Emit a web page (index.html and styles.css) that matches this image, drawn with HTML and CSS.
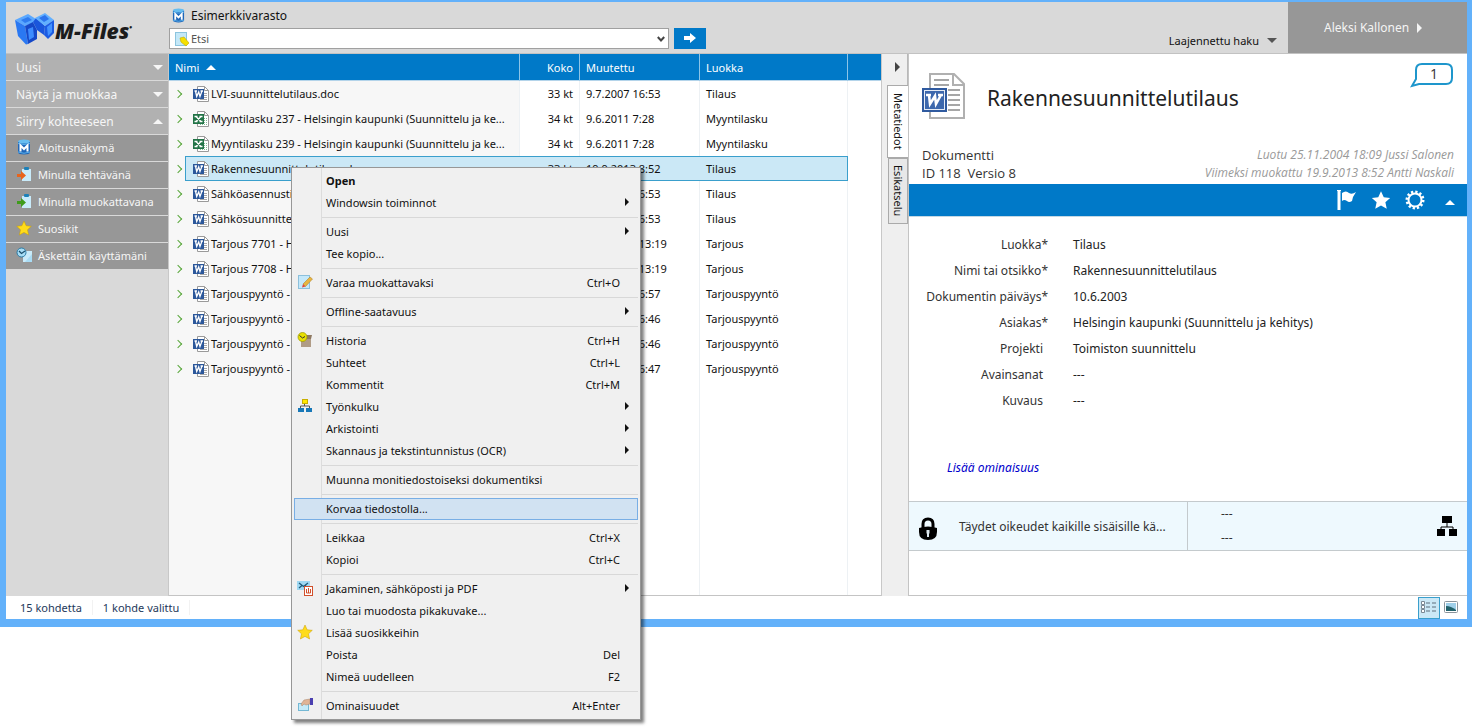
FILE: index.html
```
<!DOCTYPE html>
<html lang="fi">
<head>
  <meta charset="UTF-8" />
  <meta name="viewport" content="width=device-width, initial-scale=1.0" />
  <title>M-Files - Esimerkkivarasto</title>
  <link rel="stylesheet" href="styles.css">
</head>
<body>

  <!-- shared icons -->
  <svg class="sprite" aria-hidden="true">
    <symbol id="icon-word" viewBox="0 0 16 16">
      <path d="M4.500.5h7l4 4v11h-11z" fill="#fff" stroke="#9a9a9a" />
      <path d="M11.500.5v4h4" fill="none" stroke="#9a9a9a" />
      <path d="M11 7.500h3M11 9.500h3M11 11.500h3M7 13.500h7" stroke="#a9a9a9" />
      <rect x="0" y="3" width="11" height="10" fill="#2b579a" />
      <path d="M1.500 5h2.500M2.500 5l1.200 5.500L5.700 6l1.300 4.500L9 5M7.500 5H10" fill="none" stroke="#fff" stroke-width="1.300" />
    </symbol>
    <symbol id="icon-excel" viewBox="0 0 16 16">
      <path d="M4.500.5h7l4 4v11h-11z" fill="#fff" stroke="#9a9a9a" />
      <path d="M11.500.5v4h4" fill="none" stroke="#9a9a9a" />
      <path d="M11 7.500h3M11 9.500h3M11 11.500h3M7 13.500h7" stroke="#7fb894" stroke-dasharray="1 1" />
      <rect x="0" y="3" width="11" height="10" fill="#217346" />
      <path d="M1.500 5.500h3M6.500 5.500h3M1.500 10.500h3M6.500 10.500h3M3 5.500l5 5M8 5.500l-5 5" fill="none" stroke="#fff" stroke-width="1.300" />
    </symbol>
    <symbol id="icon-vault" viewBox="0 0 14 16">
      <path d="M1 2.500v11c0 1 2.500 2 6 2s6-1 6-2v-11z" fill="#1f66b8" />
      <ellipse cx="7" cy="2.500" rx="6" ry="2" fill="#67bdf0" />
      <path d="M1 4.500q6 2 12 0M1 13q6 2.500 12 0" fill="none" stroke="#5cb0ea" />
      <path d="M3.500 12.500V6.500l3.500 3.500L10.500 6.500v6" fill="none" stroke="#fff" stroke-width="2" />
    </symbol>
    <symbol id="icon-star" viewBox="0 0 16 16">
      <path d="M8 1l2.200 4.800 5.100.5-3.800 3.500 1.100 5.200L8 12.400 3.400 15l1.100-5.200L.7 6.300l5.100-.5z" />
    </symbol>
    <symbol id="icon-clipboard" viewBox="0 0 16 16">
      <rect x="6" y="3" width="9" height="12" fill="#c9ebfa" />
      <rect x="8" y="1" width="5" height="3" rx="1" fill="#1c80b8" />
      <path d="M1 8h4V5l5 4.500L5 14v-3H1z" fill="currentColor" />
    </symbol>
    <symbol id="icon-recent" viewBox="0 0 16 16">
      <rect x="7" y="4" width="9" height="11" fill="#c9ebfa" />
      <path d="M9 15h7v-8z" fill="#a9dcf5" />
      <circle cx="5.500" cy="5.500" r="4.500" fill="#a6dcf4" stroke="#2a7ba6" />
      <path d="M3 4l2.500 2.500L9 4" fill="none" stroke="#1b4f6e" stroke-width="1.300" />
    </symbol>
    <symbol id="icon-flow" viewBox="0 0 20 20">
      <rect x="5" y="0" width="10" height="7" />
      <path d="M10 7v4M4 14v-3h12v3" fill="none" stroke="#000" />
      <rect x="0" y="13" width="8" height="7" />
      <rect x="12" y="13" width="8" height="7" />
    </symbol>
  </svg>

  <div class="window">
    <header class="topbar">
      <div class="logo">
        <svg class="logo-mark" viewBox="0 0 40 32" aria-hidden="true">
          <path d="M0 7l13-6 8 5-3 4-8 3z" fill="#5aa8ff" />
          <path d="M6 7l7-3 4 3-7 3z" fill="#2f7cf0" />
          <path d="M0 7l10 6 3 18-2 .5L3 23z" fill="#2a78f2" />
          <path d="M10 13l8-4 4 8v9l-9 5z" fill="#1548c8" />
          <path d="M13 16l5-2 1 10-5 3z" fill="#3d8cff" />
          <path d="M18 9l3-4 9 8-1 9-7-5z" fill="#1a56dc" />
          <path d="M20 5l10-5 9 7-9 6z" fill="#62b0ff" />
          <path d="M24 5l6-3 4 4-5 3z" fill="#2c74ee" />
          <path d="M30 13l9-6v13l-6 6-4-4z" fill="#1c5ce4" />
          <path d="M32 14l5-4v9l-4 4z" fill="#4593ff" />
        </svg>
        <span class="logo-text">M-Files<sup>•</sup></span>
      </div>

      <div class="search">
        <div class="vault">
          <svg class="icon-vault" viewBox="0 0 14 16"><use href="#icon-vault" /></svg>
          <span>Esimerkkivarasto</span>
        </div>
        <form class="search-row">
          <div class="search-box">
            <svg class="icon" viewBox="0 0 16 16" aria-hidden="true">
              <rect x="2.500" y="1.500" width="11" height="13" fill="#c4e8f8" stroke="#8cc4de" />
              <path d="M7 7l4-1 5 6-3 3-5-4z" fill="#f5e000" stroke="#c4a800" stroke-width=".6" />
            </svg>
            <input type="text" placeholder="Etsi" aria-label="Etsi">
            <button type="button" class="search-drop" aria-label="Aiemmat haut">
              <svg viewBox="0 0 8 6"><path d="M.8 1L4 4.500 7.200 1" fill="none" stroke="#444" stroke-width="2" /></svg>
            </button>
          </div>
          <button type="submit" class="search-go" aria-label="Hae">
            <svg viewBox="0 0 12 10"><path d="M0 3h6V0l6 5-6 5V7H0z" fill="#fff" /></svg>
          </button>
        </form>
      </div>

      <button type="button" class="advanced">Laajennettu haku <span class="tri tri-down"></span></button>
      <button type="button" class="user">Aleksi Kallonen <span class="tri tri-right"></span></button>
    </header>

    <div class="content">
      <nav class="sidebar">
        <button type="button" class="side-group">Uusi <span class="tri tri-down"></span></button>
        <button type="button" class="side-group">Näytä ja muokkaa <span class="tri tri-down"></span></button>
        <button type="button" class="side-group">Siirry kohteeseen <span class="tri tri-up"></span></button>
        <a href="#" class="side-item"><svg class="icon"><use href="#icon-vault" /></svg>Aloitusnäkymä</a>
        <a href="#" class="side-item"><svg class="icon orange"><use href="#icon-clipboard" /></svg>Minulla tehtävänä</a>
        <a href="#" class="side-item"><svg class="icon green"><use href="#icon-clipboard" /></svg>Minulla muokattavana</a>
        <a href="#" class="side-item"><svg class="icon gold"><use href="#icon-star" /></svg>Suosikit</a>
        <a href="#" class="side-item"><svg class="icon"><use href="#icon-recent" /></svg>Äskettäin käyttämäni</a>
      </nav>

      <main class="listing">
        <table class="files">
          <colgroup>
            <col class="col-expand">
            <col class="col-name">
            <col class="col-size">
            <col class="col-date">
            <col class="col-class">
            <col class="col-rest">
          </colgroup>
          <thead>
            <tr>
              <th colspan="2">Nimi <span class="tri tri-up"></span></th>
              <th class="num">Koko</th>
              <th>Muutettu</th>
              <th>Luokka</th>
              <th></th>
            </tr>
          </thead>
          <tbody>
            <tr>
              <td><button type="button" class="expand" aria-label="Laajenna"></button></td>
              <td><svg class="icon"><use href="#icon-word" /></svg>LVI-suunnittelutilaus.doc</td>
              <td class="num">33 kt</td><td>9.7.2007 16:53</td><td>Tilaus</td><td></td>
            </tr>
            <tr>
              <td><button type="button" class="expand" aria-label="Laajenna"></button></td>
              <td><svg class="icon"><use href="#icon-excel" /></svg>Myyntilasku 237 - Helsingin kaupunki (Suunnittelu ja ke...</td>
              <td class="num">34 kt</td><td>9.6.2011 7:28</td><td>Myyntilasku</td><td></td>
            </tr>
            <tr>
              <td><button type="button" class="expand" aria-label="Laajenna"></button></td>
              <td><svg class="icon"><use href="#icon-excel" /></svg>Myyntilasku 239 - Helsingin kaupunki (Suunnittelu ja ke...</td>
              <td class="num">34 kt</td><td>9.6.2011 7:28</td><td>Myyntilasku</td><td></td>
            </tr>
            <tr class="selected">
              <td><button type="button" class="expand" aria-label="Laajenna"></button></td>
              <td><svg class="icon"><use href="#icon-word" /></svg>Rakennesuunnittelutilaus.doc</td>
              <td class="num">33 kt</td><td>19.9.2013 8:52</td><td>Tilaus</td><td></td>
            </tr>
            <tr>
              <td><button type="button" class="expand" aria-label="Laajenna"></button></td>
              <td><svg class="icon"><use href="#icon-word" /></svg>Sähköasennustilaus.doc</td>
              <td class="num">33 kt</td><td>9.7.2007 16:53</td><td>Tilaus</td><td></td>
            </tr>
            <tr>
              <td><button type="button" class="expand" aria-label="Laajenna"></button></td>
              <td><svg class="icon"><use href="#icon-word" /></svg>Sähkösuunnittelutilaus.doc</td>
              <td class="num">33 kt</td><td>9.7.2007 16:53</td><td>Tilaus</td><td></td>
            </tr>
            <tr>
              <td><button type="button" class="expand" aria-label="Laajenna"></button></td>
              <td><svg class="icon"><use href="#icon-word" /></svg>Tarjous 7701 - Helsingin kaupunki</td>
              <td class="num">34 kt</td><td>10.6.2008 13:19</td><td>Tarjous</td><td></td>
            </tr>
            <tr>
              <td><button type="button" class="expand" aria-label="Laajenna"></button></td>
              <td><svg class="icon"><use href="#icon-word" /></svg>Tarjous 7708 - Helsingin kaupunki</td>
              <td class="num">34 kt</td><td>10.6.2008 13:19</td><td>Tarjous</td><td></td>
            </tr>
            <tr>
              <td><button type="button" class="expand" aria-label="Laajenna"></button></td>
              <td><svg class="icon"><use href="#icon-word" /></svg>Tarjouspyyntö - LVI</td>
              <td class="num">33 kt</td><td>9.7.2007 16:57</td><td>Tarjouspyyntö</td><td></td>
            </tr>
            <tr>
              <td><button type="button" class="expand" aria-label="Laajenna"></button></td>
              <td><svg class="icon"><use href="#icon-word" /></svg>Tarjouspyyntö - Rakenne</td>
              <td class="num">33 kt</td><td>9.7.2007 16:46</td><td>Tarjouspyyntö</td><td></td>
            </tr>
            <tr>
              <td><button type="button" class="expand" aria-label="Laajenna"></button></td>
              <td><svg class="icon"><use href="#icon-word" /></svg>Tarjouspyyntö - Sähkö</td>
              <td class="num">33 kt</td><td>9.7.2007 16:46</td><td>Tarjouspyyntö</td><td></td>
            </tr>
            <tr>
              <td><button type="button" class="expand" aria-label="Laajenna"></button></td>
              <td><svg class="icon"><use href="#icon-word" /></svg>Tarjouspyyntö - Urakka</td>
              <td class="num">33 kt</td><td>9.7.2007 16:47</td><td>Tarjouspyyntö</td><td></td>
            </tr>
            <tr class="filler"><td></td><td></td><td></td><td></td><td></td><td></td></tr>
          </tbody>
        </table>
      </main>

      <div class="tabs">
        <button type="button" class="collapse" aria-label="Piilota"><span class="tri tri-right"></span></button>
        <button type="button" class="tab active">Metatiedot</button>
        <button type="button" class="tab">Esikatselu</button>
      </div>

      <section class="card">
        <div class="card-head">
          <div class="card-title">
            <svg class="doc-icon" viewBox="0 0 43 46" aria-hidden="true">
              <path d="M8 1h24l10 10v34H8z" fill="#fff" stroke="#b0b0b0" stroke-width="2" />
              <path d="M31 1v11h11" fill="none" stroke="#b0b0b0" stroke-width="2" />
              <path d="M12 7h15M12 12h15M26 17h12M26 22h12M26 27h12M26 32h12M26 37h12" stroke="#a6a6a6" stroke-width="2" />
              <rect x="0" y="15" width="25" height="24" fill="#2f5a9f" />
              <rect x="2.500" y="17.500" width="20" height="19" fill="#3d68ad" stroke="#e6ecf5" />
              <path d="M4 22h5M7 22l1 9 5-8 1 8 5-9M16 22h5" fill="none" stroke="#fff" stroke-width="2.500" />
            </svg>
            <h1>Rakennesuunnittelutilaus</h1>
            <button type="button" class="comments" aria-label="1 kommentti">
              <svg viewBox="0 0 44 26" aria-hidden="true">
                <path d="M12 2h24q6 0 6 6v8q0 6-6 6H9l-7 2 4-7V8q0-6 6-6z" fill="#fff" stroke="#1e96cc" stroke-width="2" />
              </svg>
              <span>1</span>
            </button>
          </div>
          <div class="card-meta">
            <div>Dokumentti<br>ID 118&nbsp; Versio 8</div>
            <div class="stamps">Luotu 25.11.2004 18:09 Jussi Salonen<br>Viimeksi muokattu 19.9.2013 8:52 Antti Naskali</div>
          </div>
        </div>

        <div class="card-bar">
          <button type="button" aria-label="Liputa">
            <svg viewBox="0 0 20 20"><path d="M0 0h4v1h-.5v19h-3V1H0zM5 3q4-3 7 0 3 2 7-1l-3 5-1 4q-3 2-5 0-3-2-5 0z" fill="#fff" /></svg>
          </button>
          <button type="button" aria-label="Suosikki"><svg class="white" viewBox="0 0 16 16"><use href="#icon-star" /></svg></button>
          <button type="button" aria-label="Asetukset">
            <svg viewBox="0 0 20 20">
              <circle cx="10" cy="10" r="8" fill="none" stroke="#fff" stroke-width="3" stroke-dasharray="2.200 1.990" />
              <circle cx="10" cy="10" r="6.500" fill="none" stroke="#fff" stroke-width="2" />
            </svg>
          </button>
          <button type="button" aria-label="Pienennä"><span class="tri tri-up"></span></button>
        </div>

        <dl class="props">
          <dt>Luokka*</dt><dd>Tilaus</dd>
          <dt>Nimi tai otsikko*</dt><dd>Rakennesuunnittelutilaus</dd>
          <dt>Dokumentin päiväys*</dt><dd>10.6.2003</dd>
          <dt>Asiakas*</dt><dd>Helsingin kaupunki (Suunnittelu ja kehitys)</dd>
          <dt class="optional">Projekti</dt><dd>Toimiston suunnittelu</dd>
          <dt class="optional">Avainsanat</dt><dd>---</dd>
          <dt class="optional">Kuvaus</dt><dd>---</dd>
        </dl>
        <a href="#" class="add-prop">Lisää ominaisuus</a>

        <div class="card-foot">
          <div class="rights">
            <svg class="lock" viewBox="0 0 18 24" aria-hidden="true">
              <path d="M4 11V7q0-5 5-5t5 5v4" fill="none" stroke="#000" stroke-width="3" />
              <path d="M0 11q9-3 18 0v4q0 8-9 8t-9-8z" fill="#000" />
              <path d="M7.500 13h3v3l-.5 1v3H8v-3l-.5-1z" fill="#dde8ee" />
            </svg>
            <span>Täydet oikeudet kaikille sisäisille kä...</span>
          </div>
          <div class="workflow">
            <div>---<br>---</div>
            <svg class="flow" viewBox="0 0 20 20" aria-hidden="true"><use href="#icon-flow" /></svg>
          </div>
        </div>
      </section>
    </div>

    <footer class="status">
      <span>15 kohdetta</span>
      <span>1 kohde valittu</span>
      <div class="views">
        <button type="button" class="view active" aria-label="Luettelo">
          <svg viewBox="0 0 16 13">
            <path d="M.5.500h3v3h-3zM.5 4.500h3v3h-3zM.5 8.500h3v3h-3z" fill="#fff" stroke="#7b8894" />
            <path d="M5 2h4M11 2h4M5 6h4M11 6h4M5 10h4M11 10h4" stroke="#5f6f7d" />
          </svg>
        </button>
        <button type="button" class="view" aria-label="Pikkukuvat">
          <svg viewBox="0 0 16 13">
            <rect x="1.500" y=".5" width="13" height="11" rx="1" fill="#fff" stroke="#8a949c" />
            <rect x="3" y="2" width="10" height="8" fill="#9fd0ea" />
            <path d="M3 5q5 0 10 4v1H3z" fill="#22626b" />
          </svg>
        </button>
      </div>
    </footer>
  </div>

  <div class="menu" role="menu">
    <button type="button" role="menuitem" class="default"><i></i>Open</button>
    <button type="button" role="menuitem" class="sub"><i></i>Windowsin toiminnot</button>
    <hr>
    <button type="button" role="menuitem" class="sub"><i></i>Uusi</button>
    <button type="button" role="menuitem"><i></i>Tee kopio...</button>
    <hr>
    <button type="button" role="menuitem"><i><svg class="icon" viewBox="0 0 16 16">
      <rect x="1.500" y="1.500" width="11" height="13" fill="#c4e8fa" stroke="#8cc0dc" />
      <path d="M6 10l7-7 2.500 2-7 7.500z" fill="#e8b540" stroke="#a87c20" stroke-width=".5" />
      <path d="M6 10l2.500 2.500L5 13.500z" fill="#e0483c" />
    </svg></i>Varaa muokattavaksi <kbd>Ctrl+O</kbd></button>
    <hr>
    <button type="button" role="menuitem" class="sub"><i></i>Offline-saatavuus</button>
    <hr>
    <button type="button" role="menuitem"><i><svg class="icon" viewBox="0 0 16 16">
      <path d="M4 6h10v9H4z" fill="#b09c86" />
      <path d="M9 3l6 0-1 4H8z" fill="#8e7962" />
      <circle cx="5.500" cy="5" r="4.500" fill="#e8e000" stroke="#9a9500" stroke-width=".7" />
      <path d="M2.500 3.500L5.500 6l2.500-1.500" fill="none" stroke="#333" />
    </svg></i>Historia <kbd>Ctrl+H</kbd></button>
    <button type="button" role="menuitem"><i></i>Suhteet <kbd>Ctrl+L</kbd></button>
    <button type="button" role="menuitem"><i></i>Kommentit <kbd>Ctrl+M</kbd></button>
    <button type="button" role="menuitem" class="sub"><i><svg class="icon" viewBox="0 0 16 16">
      <path d="M7.500 5v3M3.500 11V8h9v3" fill="none" stroke="#555" />
      <rect x="5.500" y="1.500" width="5" height="4" fill="#ffe800" stroke="#c8ae00" />
      <rect x="1" y="10" width="6" height="4" fill="#1878b8" />
      <rect x="9" y="10" width="6" height="4" fill="#1878b8" />
    </svg></i>Työnkulku</button>
    <button type="button" role="menuitem" class="sub"><i></i>Arkistointi</button>
    <button type="button" role="menuitem" class="sub"><i></i>Skannaus ja tekstintunnistus (OCR)</button>
    <hr>
    <button type="button" role="menuitem"><i></i>Muunna monitiedostoiseksi dokumentiksi</button>
    <hr>
    <button type="button" role="menuitem" class="hover"><i></i>Korvaa tiedostolla...</button>
    <hr>
    <button type="button" role="menuitem"><i></i>Leikkaa <kbd>Ctrl+X</kbd></button>
    <button type="button" role="menuitem"><i></i>Kopioi <kbd>Ctrl+C</kbd></button>
    <hr>
    <button type="button" role="menuitem" class="sub"><i><svg class="icon" viewBox="0 0 16 16">
      <rect x="0" y="1" width="13" height="9" fill="#9fd8f2" />
      <path d="M2 3l4.500 3.500L11 3M2 8l3-2.500M11 8L8 5.500" fill="none" stroke="#1d5a7a" stroke-width="1.300" />
      <rect x="7.500" y="6.500" width="8" height="9" fill="#fff" stroke="#d2502c" />
      <path d="M9.500 9v4h4V9M11.500 8v5" fill="none" stroke="#d2502c" />
    </svg></i>Jakaminen, sähköposti ja PDF</button>
    <button type="button" role="menuitem"><i></i>Luo tai muodosta pikakuvake...</button>
    <button type="button" role="menuitem"><i><svg class="icon gold"><use href="#icon-star" /></svg></i>Lisää suosikkeihin</button>
    <button type="button" role="menuitem"><i></i>Poista <kbd>Del</kbd></button>
    <button type="button" role="menuitem"><i></i>Nimeä uudelleen <kbd>F2</kbd></button>
    <hr>
    <button type="button" role="menuitem"><i><svg class="icon" viewBox="0 0 16 16">
      <rect x="1.500" y="6.500" width="10" height="7" fill="#c4eaf8" stroke="#74b8d4" />
      <path d="M4 7l3-4 6-1v5l-4 1-2-1-2 2z" fill="#e0b496" stroke="#a88468" stroke-width=".5" />
      <rect x="13" y="1" width="3" height="7" fill="#4a3fb0" />
    </svg></i>Ominaisuudet <kbd>Alt+Enter</kbd></button>
  </div>

</body>
</html>
```

FILE: styles.css
```
* {
  box-sizing: border-box;
}

body {
  margin: 0;
  background: #fff;
  color: #111;
  font-family: "Noto Sans", "Open Sans", sans-serif;
  font-size: 11px;
}

button,
input {
  font: inherit;
  color: inherit;
  margin: 0;
  padding: 0;
  border: none;
  background: none;
}

.sprite {
  position: absolute;
  width: 0;
  height: 0;
}

.icon {
  width: 16px;
  height: 16px;
  flex: none;
}

.orange { color: #e8641c; }
.green { color: #3f9c1c; }
.gold { fill: #ffdc1a; stroke: #c99a00; stroke-width: 0.5px; }
.white { fill: #fff; }

/* small triangles */
.tri {
  display: inline-block;
  width: 0;
  height: 0;
  border: 5px solid transparent;
}

.tri-up { border-top: none; border-bottom-color: currentColor; }
.tri-down { border-bottom: none; border-top-color: currentColor; }
.tri-right { border-right: none; border-left-color: currentColor; }

/* window */
.window {
  display: flex;
  flex-direction: column;
  height: calc(100vh - 101px);
  min-height: 560px;
  border: solid #63b1fa;
  border-width: 2px 5px 8px 6px;
  box-shadow: 0 1px 1px #8aa8c4;
}

/* top bar */
.topbar {
  display: flex;
  height: 52px;
  flex: none;
  background: #d9d9d9;
  border-bottom: 1px solid #c2c2c2;
}

.logo {
  display: flex;
  width: 163px;
  padding: 11px 0 0 9px;
}

.logo-mark {
  width: 40px;
  height: 32px;
}

.logo-text {
  color: #1c1c1c;
  font-family: "Open Sans", sans-serif;
  font-size: 21px;
  font-weight: 800;
  font-style: italic;
  line-height: 36px;
}

.logo-text sup {
  font-size: 7px;
  line-height: 0;
  vertical-align: 9px;
}

.search {
  width: 537px;
}

.vault {
  display: flex;
  align-items: center;
  gap: 6px;
  height: 26px;
  padding-left: 3px;
  font-size: 12px;
}

.icon-vault {
  width: 13px;
  height: 15px;
}

.search-row {
  display: flex;
  gap: 5px;
  height: 21px;
}

.search-box {
  display: flex;
  flex: 1;
  align-items: center;
  gap: 2px;
  padding: 0 3px;
  background: #fff;
  border: 1px solid #a0a0a0;
}

.search-box input {
  flex: 1;
  outline: none;
}

.search-box input::placeholder {
  color: #555;
}

.search-drop svg {
  display: block;
  width: 8px;
  height: 6px;
}

.search-go {
  width: 32px;
  background: #0079c8;
}

.search-go svg {
  width: 12px;
  height: 10px;
}

.advanced {
  display: flex;
  align-items: center;
  gap: 8px;
  height: 24px;
  margin: 26px 11px 0 auto;
}

.advanced .tri {
  color: #555;
}

.user {
  display: flex;
  align-items: center;
  gap: 8px;
  width: 179px;
  padding-left: 36px;
  background: #979797;
  color: #f4f4f4;
  font-size: 12px;
}

.content {
  display: flex;
  flex: 1;
  min-height: 0;
}

/* sidebar */
.sidebar {
  width: 163px;
  flex: none;
  background: #d9d9d9;
  border-right: 1px solid #c8c8c8;
}

.side-group,
.side-item {
  display: flex;
  align-items: center;
  width: 100%;
  height: 27px;
  padding: 0 5px 0 10px;
  border-bottom: 1px solid #d9d9d9;
  color: #f6f6f6;
  text-decoration: none;
  white-space: nowrap;
}

.side-group {
  justify-content: space-between;
  background: #b1b1b1;
  font-size: 12px;
}

.side-item {
  gap: 6px;
  padding-bottom: 2px;
  background: #979797;
}

/* file list */
.listing {
  flex: 1 1 712px;
  min-width: 0;
  border-bottom: 1px solid #c4c4c4;
}

.files {
  width: 100%;
  height: 100%;
  table-layout: fixed;
  border-collapse: separate;
  border-spacing: 0;
}

.col-expand { width: 16px; }
.col-size { width: 60px; }
.col-date { width: 120px; }
.col-class { width: 148px; }
.col-rest { width: 33px; }

.files th {
  height: 27px;
  padding: 0 6px;
  background: #0079c8;
  border-right: 1px solid #8cc4e8;
  border-bottom: 1px solid #b4d4ea;
  color: #fff;
  font-weight: normal;
  text-align: left;
}

.files th .tri {
  margin: 0 0 2px 4px;
}

.files td {
  height: 25px;
  padding: 0 6px;
  border-right: 1px solid #edf1f4;
  overflow: hidden;
  white-space: nowrap;
}

.files th:last-child,
.files td:last-child,
.files td:first-child {
  border-right: none;
}

.files .num {
  text-align: right;
}

.files td:nth-child(1),
.files td:nth-child(2) {
  background: #f7f7f7;
}

.files td:nth-child(1) {
  padding: 0;
}

.files td:nth-child(2) {
  padding: 0 0 0 8px;
}

.files td .icon {
  margin-right: 2px;
  vertical-align: -4px;
}

.expand {
  display: block;
  width: 6px;
  height: 6px;
  margin-left: 6px;
  border: solid #57a639;
  border-width: 1px 1px 0 0;
  transform: rotate(45deg);
}

.files .selected td:nth-child(n + 2):nth-child(-n + 5) {
  background: #cbe8f6;
  border: solid #3a9fcc;
  border-width: 1px 0;
}

.files .selected td:nth-child(2) {
  padding-left: 7px;
  border-left-width: 1px !important;
}

.files .selected td:nth-child(3) {
  padding-right: 7px;
}

.files .selected td:nth-child(5) {
  border-right-width: 1px !important;
}

.files .filler td {
  height: auto;
}

/* vertical tabs */
.tabs {
  display: flex;
  flex-direction: column;
  align-items: flex-end;
  width: 27px;
  flex: none;
  background: #efefef;
  border-left: 1px solid #c8c8c8;
}

.collapse {
  width: 26px;
  height: 31px;
  padding: 0 0 4px 5px;
  border-right: 1px solid #b8b8b8;
  color: #444;
}

.tab {
  width: 20px;
  height: 66px;
  border: 1px solid #aaa;
  background: #e8e8e8;
  line-height: 18px;
  writing-mode: vertical-rl;
}

.tab.active {
  width: 21px;
  height: 73px;
  border-right: none;
  background: #fff;
}

/* metadata card */
.card {
  flex: 1 1 559px;
  min-width: 0;
  border: solid #c4c4c4;
  border-width: 0 0 1px 1px;
  color: #333;
  font-size: 12px;
}

.card-head {
  height: 130px;
  padding: 8px 13px 0 13px;
  font-family: "Open Sans", sans-serif;
}

.card-title {
  display: flex;
  align-items: center;
  gap: 22px;
  height: 68px;
}

.doc-icon {
  width: 43px;
  height: 46px;
}

.card h1 {
  margin: 4px 0 0;
  color: #222;
  font-family: "Noto Sans", sans-serif;
  font-size: 21px;
  font-weight: normal;
}

.comments {
  display: grid;
  align-self: flex-start;
  width: 44px;
  margin-left: auto;
  font-size: 14px;
}

.comments svg,
.comments span {
  grid-area: 1 / 1;
}

.comments svg {
  width: 44px;
  height: 26px;
}

.comments span {
  line-height: 24px;
  padding-left: 4px;
}

.card-meta {
  display: flex;
  justify-content: space-between;
  margin-top: 16px;
  line-height: 18px;
}

.card-meta > div:first-child {
  font-size: 13px;
}

.stamps {
  color: #999;
  font-style: italic;
  text-align: right;
}

.card-bar {
  display: flex;
  justify-content: flex-end;
  align-items: center;
  gap: 14px;
  height: 33px;
  padding-right: 12px;
  background: #0079c8;
  border-bottom: 1px solid #c4d8e4;
  color: #fff;
}

.card-bar svg {
  display: block;
  width: 20px;
  height: 20px;
}

.card-bar button:last-child {
  margin-left: 6px;
}

.props {
  display: grid;
  grid-template-columns: 139px 1fr;
  column-gap: 25px;
  margin: 15px 0 0;
  line-height: 26px;
}

.props dt {
  text-align: right;
  white-space: nowrap;
}

/* keeps the words in line when there is no asterisk */
.props .optional {
  padding-right: 5px;
}

.props dd {
  margin: 0;
  color: #222;
}

.add-prop {
  display: block;
  margin: 42px 0 21px 38px;
  color: #00c;
  font-style: italic;
  line-height: 24px;
  text-decoration: none;
}

.card-foot {
  display: flex;
  height: 50px;
  background: #eef9fe;
  border: solid #c4cacd;
  border-width: 1px 0;
}

.rights,
.workflow {
  display: flex;
  flex: 0 0 50%;
  align-items: center;
  white-space: nowrap;
}

.rights {
  gap: 22px;
  padding-left: 10px;
  border-right: 1px solid #c4cacd;
}

.lock {
  width: 18px;
  height: 24px;
  margin-top: 6px;
}

.workflow {
  justify-content: space-between;
  padding: 0 10px 0 33px;
  line-height: 24px;
}

.flow {
  width: 20px;
  height: 22px;
}

/* status bar */
.status {
  display: flex;
  align-items: center;
  flex: none;
  height: 23px;
  padding: 0 5px 0 14px;
  background: #fff;
  color: #1e395b;
}

.status span {
  padding-right: 10px;
  margin-right: 10px;
  border-right: 1px solid #f2f2f2;
}

.views {
  display: flex;
  margin-left: auto;
}

.view {
  width: 22px;
  height: 22px;
  border: 1px solid transparent;
}

.view.active {
  background: #cbe8f6;
  border-color: #3a9fcc;
}

.view svg {
  display: block;
  width: 16px;
  height: 13px;
  margin: 0 auto;
}

/* context menu */
.menu {
  position: absolute;
  top: 167px;
  left: 291px;
  width: 350px;
  padding: 2px;
  background: linear-gradient(to right, transparent 29px, #dcdcdc 29px, #dcdcdc 30px, transparent 30px) #f0f0f0;
  border: 1px solid #979797;
  box-shadow: 3px 3px 3px rgba(0, 0, 0, 0.5);
}

.menu button {
  display: flex;
  align-items: center;
  width: 100%;
  height: 22px;
  padding: 0 17px 2px 0;
  border: 1px solid transparent;
  text-align: left;
  white-space: nowrap;
}

.menu i {
  width: 31px;
  padding-left: 2px;
  line-height: 0;
}

.menu kbd {
  margin-left: auto;
  font-family: inherit;
}

.menu .default {
  font-weight: bold;
}

.menu .sub {
  padding-right: 8px;
}

.menu .sub::after {
  content: "";
  margin-left: auto;
  border: solid transparent;
  border-width: 4px 0 4px 4px;
  border-left-color: #111;
}

.menu .hover {
  background: #d1e2f2;
  border-color: #78aee5;
}

.menu hr {
  height: 1px;
  margin: 3px 0 3px 28px;
  border: none;
  background: #d8d8d8;
}
```
